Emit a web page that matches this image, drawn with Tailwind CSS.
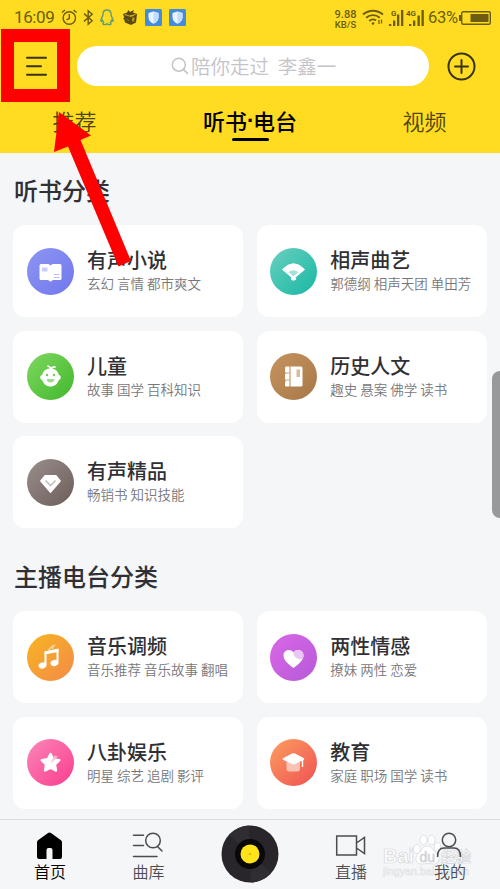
<!DOCTYPE html>
<html lang="zh-CN">
<head>
<meta charset="utf-8">
<title>听书·电台</title>
<script src="https://cdn.jsdelivr.net/npm/@tailwindcss/browser@4"></script>
</head>
<body class="relative h-[889px] w-[500px] overflow-hidden bg-[#f4f6f8] font-['Noto_Sans_CJK_SC',sans-serif] text-[#303034]">
<div class="flex h-full flex-col">
<header class="h-[153px] shrink-0 bg-[#ffdc21]">
  <!-- status bar -->
  <div class="flex h-[35px] items-center pl-[14px] pr-[9px] font-[Roboto,sans-serif] text-[#6b5c10]">
    <span class="w-[47px] text-[17px] leading-none tracking-[-0.4px]">16:09</span>
    <svg class="h-[17px] w-[17px]" viewBox="0 0 17 17" fill="none" stroke="currentColor" stroke-width="1.4"><circle cx="8.3" cy="9" r="6.2"/><path d="M8.3 5v4.5l-2.8 1.3M1 3.5 4 1M12.6 1l3 2.5"/></svg>
    <svg class="ml-[5px] h-[17px] w-[11px]" viewBox="0 0 11 17" fill="none" stroke="currentColor" stroke-width="1.4"><path d="m1 4.6 8.2 7.2-4 3.5V1.700l4 3.500L1 12.400"/></svg>
    <svg class="ml-[6px] h-[17px] w-[14px]" viewBox="0 0 14 17" fill="none" stroke="#5f9a78" stroke-width="1.4"><path d="M7 1C4.300 1 3 3 3 5.200c0 1.500-.3 2-1 3.200-1 1.600-1.200 3.300-.8 3.800.4.300 1-.3 1.300-.7.200 1 .7 1.600 1.200 2.100-.9.500-1 1.600 0 1.900 1.400.3 2.600 0 3.300-.7.700.7 1.900 1 3.300.7 1-.3.9-1.400 0-1.900.5-.5 1-1.100 1.200-2.100.3.400.9 1 1.300.7.400-.5.200-2.200-.8-3.800-.7-1.200-1-1.700-1-3.200C11 3 9.700 1 7 1z"/></svg>
    <svg class="ml-[8px] h-[17px] w-[16px]" viewBox="0 0 16 17"><path d="m1 5 4-1.500L6.500 1 8 3l4-2-1 2.600L15 5l-1 8.500L9 16l-6-2.500-.8-3L1 10l1.200-1.500z" fill="#594914"/><path d="m2.500 5.500 5 1.500 6-1.500M8 7.500l3.800-1M5.500 10.500l1 1M10 9h2v1.500h-1.500V12h2" fill="none" stroke="#d8b91c" stroke-width=".9"/></svg>
    <svg class="ml-[7px] h-[17px] w-[17px]" viewBox="0 0 17 17"><rect width="17" height="17" rx="1.500" fill="#438bdd"/><path d="M8.500 2.500 13.500 4v4.500c0 3-2.300 5-5 6.300-2.700-1.300-5-3.300-5-6.300V4z" fill="#eaf4ff"/><path d="M8.500 2.500 13.500 4v4.500c0 3-2.300 5-5 6.300z" fill="#c5dcf8"/></svg>
    <svg class="ml-[7px] h-[17px] w-[17px]" viewBox="0 0 17 17"><rect width="17" height="17" rx="1.500" fill="#438bdd"/><path d="M8.500 2.500 13.500 4v4.500c0 3-2.300 5-5 6.300-2.700-1.300-5-3.300-5-6.300V4z" fill="#eaf4ff"/><path d="M8.500 2.500 13.500 4v4.500c0 3-2.300 5-5 6.300z" fill="#c5dcf8"/></svg>
    <div class="ml-auto flex items-center">
      <div class="mt-[2px] w-[23px] text-center font-medium"><div class="text-[11px] leading-[11px]">9.88</div><div class="text-[9.500px] leading-[9px]">KB/S</div></div>
      <svg class="ml-[5px] h-[17px] w-[22px]" viewBox="0 0 22 17" fill="none" stroke="currentColor" stroke-width="1.900"><path d="M1 5.500c6-5 14-5 20 0M4.200 8.800c4-3.600 9.600-3.600 13.600 0M7.300 12c2.200-2 4.500-2.100 6.700-.4"/><circle cx="11" cy="14.500" r="1.300" fill="currentColor" stroke="none"/><path d="M17 11v4M19.500 10.500v4" stroke-width="1.200"/></svg>
      <svg class="ml-[5px] h-[18px] w-[15px]" viewBox="0 0 15 18" fill="currentColor"><path d="M0 15h2.300v2H0zM4 11.500h2.300V17H4zM8 5.500h2.300V17H8zM12 1h2.300v16H12z"/><text x="2" y="7" font-size="8" font-weight="700" font-family="Roboto">G</text></svg>
      <svg class="ml-[2px] h-[18px] w-[18px]" viewBox="0 0 18 18" fill="currentColor"><path d="M3 15h2.300v2H3zM7 11.500h2.300V17H7zM11.500 6.500h2.300V17h-2.300zM15.500 1h2.300v16h-2.300z"/><text x="0" y="7" font-size="8" font-weight="700" font-family="Roboto">4G</text></svg>
      <span class="ml-[4px] mt-[2px] w-[31px] whitespace-nowrap text-[16.500px] leading-none tracking-[-0.300px]">63%</span>
      <svg class="h-[14px] w-[32px]" viewBox="0 0 32 14"><rect x="2.700" y=".7" width="28.600" height="12.600" rx="1.500" fill="none" stroke="currentColor" stroke-width="1.400"/><path d="M0 4h2v6H0zM11.500 3h18v8h-18z" fill="currentColor"/></svg>
    </div>
  </div>
  <!-- search row -->
  <div class="flex h-[62px] items-center pl-[25px] pr-[24px]">
    <svg class="h-[22px] w-[22px] shrink-0" viewBox="0 0 22 22" stroke="#393310" stroke-width="2" stroke-linecap="round"><path d="M2 2.700h19M2 11.200h14M2 19.700h19"/></svg>
    <div class="ml-[29.500px] flex h-10 w-[352.500px] items-center rounded-full bg-white pl-[94px] text-[#c5c2c8]">
      <svg class="h-[18px] w-[18px]" viewBox="0 0 18 18" fill="none" stroke="currentColor" stroke-width="1.500" stroke-linecap="round"><circle cx="7.800" cy="7.800" r="6.500"/><path d="m12.600 12.600 3.800 3.800"/></svg>
      <span class="ml-[2.500px] whitespace-pre text-[19.500px] font-[350] leading-[40px]">陪你走过  李鑫一</span>
    </div>
    <svg class="ml-auto h-[29px] w-[29px]" viewBox="0 0 29 29" fill="none" stroke="#393310" stroke-width="2" stroke-linecap="round"><circle cx="14.500" cy="14.500" r="13"/><path d="M14.500 8v13M8 14.500h13"/></svg>
  </div>
  <!-- tabs -->
  <nav class="grid grid-cols-[149px_202px_147px] text-center text-[22px] leading-[47px] text-[#4f430f]">
    <div class="font-[350]">推荐</div>
    <div class="flex flex-col items-center font-medium text-black"><span class="flex">听书<span class="w-[6px] font-['Liberation_Sans'] font-bold">·</span>电台</span><i class="-mt-[6px] h-[3px] w-[37px] rounded-full bg-black"></i></div>
    <div class="font-[350]">视频</div>
  </nav>
</header>

<main class="flex-1 px-[13px]">
  <h2 class="h-[72px] pl-px pt-[16.500px] text-[24px] font-medium leading-[40px]">听书分类</h2>
  <div class="grid grid-cols-2 gap-[13.500px]">
    <section class="flex h-[92px] items-center rounded-xl bg-white pl-[13.500px]">
      <svg class="h-[47px] w-[47px] shrink-0" viewBox="0 0 47 47"><defs><linearGradient id="g1" x2="1" y2="1"><stop stop-color="#8c96f1"/><stop offset="1" stop-color="#7277ee"/></linearGradient></defs><circle cx="23.500" cy="23.500" r="23.500" fill="url(#g1)"/><path d="M14 16h7.500l2 1.500 2-1.500H33q1.500 0 1.500 1.500v13Q34.500 32 33 32h-7l-2.500 1.800L21 32h-7q-1.500 0-1.500-1.500v-13Q12.500 16 14 16z" fill="#fff"/><path d="M15 19.500h5.500v4H15z" fill="#c9ccff"/><path d="M27 26.500h5.500M27 29.500h5.500" stroke="#b8bcfa"/></svg>
      <div class="-mt-[2px] ml-[13.500px]"><h3 class="text-[20px] font-medium leading-[26px]">有声小说</h3><p class="whitespace-nowrap text-[13.500px] font-[350] leading-[21px] text-[#77777b]">玄幻 言情 都市爽文</p></div>
    </section>
    <section class="flex h-[92px] items-center rounded-xl bg-white pl-[13.500px]">
      <svg class="h-[47px] w-[47px] shrink-0" viewBox="0 0 47 47"><defs><linearGradient id="g2" x2="1" y2="1"><stop stop-color="#6bcfbf"/><stop offset="1" stop-color="#17b8a4"/></linearGradient></defs><circle cx="23.500" cy="23.500" r="23.500" fill="url(#g2)"/><path d="M12.500 21.500Q23.500 10 34.500 21.500L25 29.500l1 1.500-1 1h-3l-1-1 1-1.500z" fill="#fff" stroke="#fff" stroke-linejoin="round"/><path d="M18.500 24q5-3.500 10 0l-4.500 4h-1z" fill="#a5e3da"/></svg>
      <div class="-mt-[2px] ml-[13px]"><h3 class="text-[20px] font-medium leading-[26px]">相声曲艺</h3><p class="whitespace-nowrap text-[13.500px] font-[350] leading-[21px] text-[#77777b]">郭德纲 相声天团 单田芳</p></div>
    </section>
    <section class="flex h-[92px] items-center rounded-xl bg-white pl-[13.500px]">
      <svg class="h-[47px] w-[47px] shrink-0" viewBox="0 0 47 47"><defs><linearGradient id="g3" x2="1" y2="1"><stop stop-color="#7ed85f"/><stop offset="1" stop-color="#42b72d"/></linearGradient></defs><circle cx="23.500" cy="23.500" r="23.500" fill="url(#g3)"/><path d="M23.500 15.500c-4.500 0-7.500 2.500-8.300 6.500-2.300.5-3 3.500 0 5.200 1.300 3.800 4.300 6.300 8.300 6.300s7-2.500 8.300-6.300c3-1.700 2.300-4.700 0-5.200-.8-4-3.800-6.500-8.300-6.500z" fill="#fff"/><path d="M24 16.500q-.5-2.700-3-3.500M24 16q1-2.500 4-2" fill="none" stroke="#fff" stroke-width="1.700" stroke-linecap="round"/><circle cx="20" cy="22" r="1.200" fill="#71c95c"/><circle cx="27" cy="22" r="1.200" fill="#71c95c"/><path d="M19.500 26h8q-.8 3.500-4 3.500t-4-3.500z" fill="#9bdc88"/></svg>
      <div class="-mt-px ml-[13.500px]"><h3 class="text-[20px] font-medium leading-[26px]">儿童</h3><p class="whitespace-nowrap text-[13.500px] font-[350] leading-[21px] text-[#77777b]">故事 国学 百科知识</p></div>
    </section>
    <section class="flex h-[92px] items-center rounded-xl bg-white pl-[13.500px]">
      <svg class="h-[47px] w-[47px] shrink-0" viewBox="0 0 47 47"><defs><linearGradient id="g4" x2="1" y2="1"><stop stop-color="#c6935f"/><stop offset="1" stop-color="#a67847"/></linearGradient></defs><circle cx="23.500" cy="23.500" r="23.500" fill="url(#g4)"/><path d="M20.500 13.500H31q1.500 0 1.500 1.500v17q0 1.500-1.500 1.500H20.500z" fill="#fff"/><path d="M16 13.500h3.500v20H16q-1 0-1-1.500v-3l1-1-1-1v-6l1-1-1-1v-4q0-1.500 1-1.500z" fill="#fff"/><path d="M15 20h4.500M15 27h4.500" stroke="#cba27a"/><path d="M26.500 16.500h3.500v7.500h-3.500z" fill="#d9ba98"/></svg>
      <div class="-mt-px ml-[13px]"><h3 class="text-[20px] font-medium leading-[26px]">历史人文</h3><p class="whitespace-nowrap text-[13.500px] font-[350] leading-[21px] text-[#77777b]">趣史 悬案 佛学 读书</p></div>
    </section>
    <section class="flex h-[92px] items-center rounded-xl bg-white pl-[13.500px]">
      <svg class="h-[47px] w-[47px] shrink-0" viewBox="0 0 47 47"><defs><linearGradient id="g5" x2="1" y2="1"><stop stop-color="#9a8e8c"/><stop offset="1" stop-color="#6c5d5a"/></linearGradient></defs><circle cx="23.500" cy="23.500" r="23.500" fill="url(#g5)"/><path d="M18 17h11l4 5-9.500 11L14 22z" fill="#fff" stroke="#fff" stroke-width="1.800" stroke-linejoin="round"/><path d="m18.500 21.500 5 5 5-5" fill="none" stroke="#bdb5b4" stroke-width="1.300"/></svg>
      <div class="-mt-[2px] ml-[13.500px]"><h3 class="text-[20px] font-medium leading-[26px]">有声精品</h3><p class="whitespace-nowrap text-[13.500px] font-[350] leading-[21px] text-[#77777b]">畅销书 知识技能</p></div>
    </section>
  </div>
  <h2 class="h-[83px] pl-px pt-[28px] text-[24px] font-medium leading-[40px]">主播电台分类</h2>
  <div class="grid grid-cols-2 gap-[13.500px]">
    <section class="flex h-[92px] items-center rounded-xl bg-white pl-[13.500px]">
      <svg class="h-[47px] w-[47px] shrink-0" viewBox="0 0 47 47"><defs><linearGradient id="g6" x2="1" y2="1"><stop stop-color="#f7b521"/><stop offset="1" stop-color="#f48a49"/></linearGradient></defs><circle cx="23.500" cy="23.500" r="23.500" fill="url(#g6)"/><path d="M18.500 31V18.500L30.500 16v12.500" fill="none" stroke="#fff" stroke-width="2" stroke-linejoin="round"/><path d="M17.500 17.500 31.500 14.500v3.500l-14 2.500z" fill="#fff"/><ellipse cx="15.500" cy="31.500" rx="4" ry="3" transform="rotate(-15 15.500 31.500)" fill="#fff"/><ellipse cx="27.500" cy="29" rx="4" ry="3" transform="rotate(-15 27.500 29)" fill="#fff"/><path d="m21 16.500 5-5M25 15l3-4.500" stroke="#fbd9a0" stroke-width="1.200"/></svg>
      <div class="-mt-px ml-[13.500px]"><h3 class="text-[20px] font-medium leading-[26px]">音乐调频</h3><p class="whitespace-nowrap text-[13.500px] font-[350] leading-[21px] text-[#77777b]">音乐推荐 音乐故事 翻唱</p></div>
    </section>
    <section class="flex h-[92px] items-center rounded-xl bg-white pl-[13.500px]">
      <svg class="h-[47px] w-[47px] shrink-0" viewBox="0 0 47 47"><defs><linearGradient id="g7" x2="1" y2="1"><stop stop-color="#d967e6"/><stop offset="1" stop-color="#b65ad9"/></linearGradient></defs><circle cx="23.500" cy="23.500" r="23.500" fill="url(#g7)"/><path d="M23.500 34C18 30 13.500 26 13.500 21.500c0-5.500 6.500-7.500 10-3 3.500-4.500 10-2.500 10 3C33.500 26 29 30 23.500 34z" fill="#fff"/><path d="M23.500 18.500c3.500-4.500 10-2.500 10 3q0 1.500-1 3.200c-5 1.300-8.500-1.200-9-6.200z" fill="#ecc5f3"/></svg>
      <div class="-mt-px ml-[13px]"><h3 class="text-[20px] font-medium leading-[26px]">两性情感</h3><p class="whitespace-nowrap text-[13.500px] font-[350] leading-[21px] text-[#77777b]">撩妹 两性 恋爱</p></div>
    </section>
    <section class="flex h-[92px] items-center rounded-xl bg-white pl-[13.500px]">
      <svg class="h-[47px] w-[47px] shrink-0" viewBox="0 0 47 47"><defs><linearGradient id="g8" x2="1" y2="1"><stop stop-color="#fa86b8"/><stop offset="1" stop-color="#fb3d8e"/></linearGradient></defs><circle cx="23.500" cy="23.500" r="23.500" fill="url(#g8)"/><path d="m23.500 15 2.700 5.300 6 .9-4.300 4.200 1 6-5.400-2.800-5.400 2.800 1-6-4.300-4.200 6-.9z" fill="#fff" stroke="#fff" stroke-width="2.500" stroke-linejoin="round"/><path d="m23.500 24.500 4-8 3.500.8z" fill="#f9b8d3"/></svg>
      <div class="-mt-px ml-[13.500px]"><h3 class="text-[20px] font-medium leading-[26px]">八卦娱乐</h3><p class="whitespace-nowrap text-[13.500px] font-[350] leading-[21px] text-[#77777b]">明星 综艺 追剧 影评</p></div>
    </section>
    <section class="flex h-[92px] items-center rounded-xl bg-white pl-[13.500px]">
      <svg class="h-[47px] w-[47px] shrink-0" viewBox="0 0 47 47"><defs><linearGradient id="g9" x2="1" y2="1"><stop stop-color="#fb9e5e"/><stop offset="1" stop-color="#f05154"/></linearGradient></defs><circle cx="23.500" cy="23.500" r="23.500" fill="url(#g9)"/><path d="M16.500 23h13.500v6.500q0 3-3 3h-7.500q-3 0-3-3z" fill="#f9c3b4"/><path d="m22 14.500q1.500-.7 3 0l8.500 4.500q1.500 1 0 2L25 25q-1.500.8-3 0l-8.500-4q-2-1 0-2z" fill="#fff"/><path d="M32.500 20.500V28" stroke="#fff" stroke-width="1.400"/></svg>
      <div class="-mt-px ml-[13px]"><h3 class="text-[20px] font-medium leading-[26px]">教育</h3><p class="whitespace-nowrap text-[13.500px] font-[350] leading-[21px] text-[#77777b]">家庭 职场 国学 读书</p></div>
    </section>
  </div>
</main>

<footer class="grid h-[70px] shrink-0 grid-cols-5 border-t border-[#d9dbdd] text-center text-[16px] leading-[24px] text-[#4b4c50]">
  <div class="flex flex-col items-center pt-[12px] pr-[2px] text-black"><svg class="h-[27px] w-[27px]" viewBox="0 0 27 27"><path d="M12 .9q1.500-1 3 0l10 7.300q1 .8 1 2V25q0 2-2 2h-7.500V18q0-2-2-2h-2q-2 0-2 2v9H3q-2 0-2-2V10.200q0-1.200 1-2z"/></svg><span class="pl-[2px] font-[350]">首页</span></div>
  <div class="flex flex-col items-center pt-[12px] pr-[5px]"><svg class="h-[27px] w-[31px]" viewBox="0 0 31 27" fill="none" stroke="currentColor" stroke-width="1.500" stroke-linecap="round"><path d="M1.500 3.300h10M1.500 13.500h10M1.500 24.500h23.500M25.500 14.500l4.500 4.500"/><circle cx="21" cy="8.500" r="7.300"/></svg><span class="pl-[2px] font-[350]">曲库</span></div>
  <div class="flex justify-center pt-[5px] pr-px"><svg class="h-[58px] w-[58px]" viewBox="0 0 58 58"><circle cx="29" cy="29" r="28.500" fill="#29262b"/><path d="M29 29 8 10A28.500 28.500 0 0 1 28 .5zM29 29 50 48A28.500 28.500 0 0 1 30 57.500z" fill="#302d32"/><circle cx="29" cy="29" r="15" fill="#080808"/><circle cx="29" cy="29" r="9.500" fill="#ffe41c"/><circle cx="29" cy="29" r="1.300" fill="#d9bd15"/></svg></div>
  <div class="flex flex-col items-center pt-[12px]"><svg class="h-[27px] w-[31px]" viewBox="0 0 31 27" fill="none" stroke="currentColor" stroke-width="1.500"><path d="M1.700 4h19.800v19H1.700zM21.500 11l8-5.500v16l-8-5.500"/></svg><span class="pl-[2px] font-[350]">直播</span></div>
  <div class="relative z-10 flex flex-col items-center pt-[12px] pr-[2px]"><svg class="h-[27px] w-[27px]" viewBox="0 0 27 27" fill="none" stroke="currentColor" stroke-width="1.500"><circle cx="13" cy="8" r="6.700"/><path d="M1.500 25c0-6 2-9 6.500-9h10c4.500 0 6.500 3 6.500 9"/></svg><span class="pl-[2px] font-[350]">我的</span></div>
</footer>
</div>

<!-- scroll handle, annotation and watermark over the page -->
<div class="absolute left-[492px] top-[371px] h-[147px] w-4 rounded-xl bg-[#97999b]"></div>
<div class="absolute left-px top-[29px] h-[73px] w-[69px] border-[13.500px] border-[#fe0000]"></div>
<svg class="absolute left-0 top-0 h-[300px] w-[200px]" viewBox="0 0 200 300"><path d="M59 112 91 135.500 80.500 140 131 261 118.500 266.500 68 146.500 54 152z" fill="#fe0000"/></svg>
<svg class="absolute left-[380px] top-[830px] h-[50px] w-[100px]" viewBox="0 0 100 50" fill="#fff" stroke="#d3d5d8" stroke-width=".7" font-family="Liberation Sans">
  <text x="3" y="33" font-size="20" font-weight="700" textLength="31" lengthAdjust="spacingAndGlyphs">Bai</text>
  <ellipse cx="37" cy="19" rx="3.300" ry="4.500"/><ellipse cx="43.500" cy="10" rx="3.500" ry="4.800"/><ellipse cx="51.500" cy="10" rx="3.500" ry="4.800"/><ellipse cx="57.500" cy="17" rx="3.300" ry="4.500"/>
  <path d="M47 16c-5 0-5 5-9 8-4 4-2 10 3 10 4 0 8-1 12 0 6 1 8-6 4-10-4-3-5-8-10-8z"/>
  <text x="39.500" y="31.500" font-size="14" fill="#d3d5d8">du</text>
  <text x="61" y="32" font-size="15" font-weight="700" font-family="Noto Sans CJK SC">经验</text>
  <text x="3" y="45" font-size="10.500" textLength="86" fill-opacity=".5" stroke-opacity=".6">jingyan.baidu.com</text>
</svg>
</body>
</html>
